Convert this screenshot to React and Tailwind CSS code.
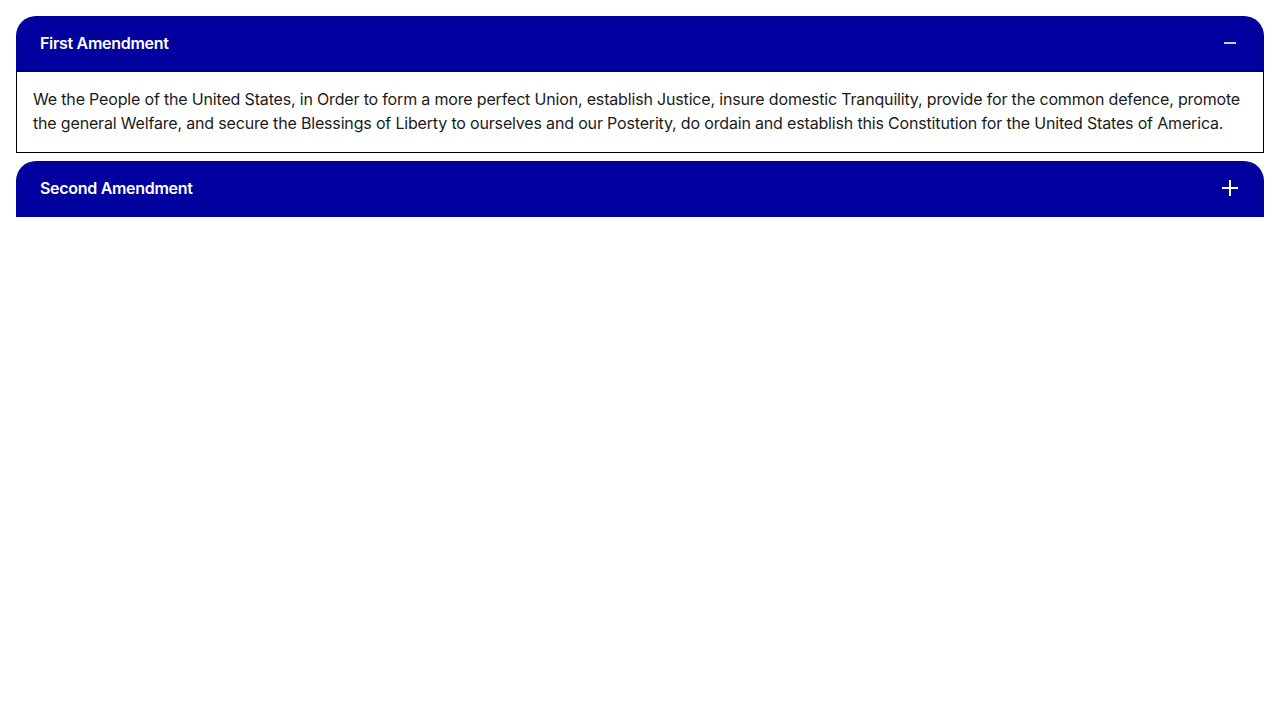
import { useState } from 'react';

const items = [
  {
    title: 'First Amendment',
    body: 'We the People of the United States, in Order to form a more perfect Union, establish Justice, insure domestic Tranquility, provide for the common defence, promote the general Welfare, and secure the Blessings of Liberty to ourselves and our Posterity, do ordain and establish this Constitution for the United States of America.',
  },
  {
    title: 'Second Amendment',
    body: 'A well regulated Militia, being necessary to the security of a free State, the right of the people to keep and bear Arms, shall not be infringed.',
  },
];

// minus is a bit shorter than the plus bar in the original
const Icon = ({ open }) => (
  <svg width="20" height="20" viewBox="0 0 20 20" fill="none" stroke="white" strokeWidth="2">
    {open ? (
      <line x1="4" y1="9" x2="16" y2="9" strokeWidth="1.6" />
    ) : (
      <>
        <line x1="2" y1="9" x2="18" y2="9" />
        <line x1="10" y1="1" x2="10" y2="17" />
      </>
    )}
  </svg>
);

const App = () => {
  const [open, setOpen] = useState(0);

  return (
    <div className="p-4 flex flex-col gap-2 bg-white min-h-screen font-['Inter',sans-serif]">
      {items.map((item, i) => (
        <div key={i}>
          <button
            onClick={() => setOpen(open === i ? -1 : i)}
            className="w-full h-14 flex items-center justify-between px-6 bg-[#00009f] text-white rounded-t-[20px] text-left"
          >
            <span className="text-base font-semibold tracking-[-0.3px] -mt-0.5">{item.title}</span>
            <Icon open={open === i} />
          </button>
          {open === i && (
            <div className="border border-black px-4 pt-[15px] pb-[17px] text-base leading-6 tracking-[-0.17px] text-[#1b1b1b] -mt-px">
              {item.body}
            </div>
          )}
        </div>
      ))}
    </div>
  );
};

export default App;
